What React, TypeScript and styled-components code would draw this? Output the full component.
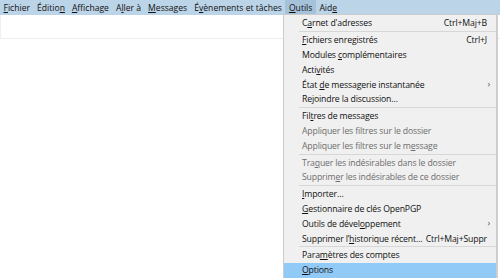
import * as React from 'react'
import styled, { createGlobalStyle } from 'styled-components'

type Entry =
  | { sep: true }
  | {
      sep?: false
      label: string
      key?: number
      shortcut?: string
      disabled?: boolean
      sub?: boolean
      active?: boolean
    }

const menuBar: { label: string; key: number; open?: boolean }[] = [
  { label: 'Fichier', key: 0 },
  { label: 'Édition', key: 6 },
  { label: 'Affichage', key: 0 },
  { label: 'Aller à', key: 1 },
  { label: 'Messages', key: 0 },
  { label: 'Évènements et tâches', key: 1 },
  { label: 'Outils', key: 0, open: true },
  { label: 'Aide', key: 3 },
]

const entries: Entry[] = [
  { label: "Carnet d'adresses", key: 1, shortcut: 'Ctrl+Maj+B' },
  { sep: true },
  { label: 'Fichiers enregistrés', key: 0, shortcut: 'Ctrl+J' },
  { label: 'Modules complémentaires', key: 8 },
  { label: 'Activités', key: 4 },
  { label: 'État de messagerie instantanée', key: 5, sub: true },
  { label: 'Rejoindre la discussion…', key: 2 },
  { sep: true },
  { label: 'Filtres de messages', key: 3 },
  { label: 'Appliquer les filtres sur le dossier', disabled: true },
  { label: 'Appliquer les filtres sur le message', key: 30, disabled: true },
  { sep: true },
  { label: 'Traquer les indésirables dans le dossier', key: 3, disabled: true },
  { label: 'Supprimer les indésirables de ce dossier', key: 7, disabled: true },
  { sep: true },
  { label: 'Importer…', key: 0 },
  { label: 'Gestionnaire de clés OpenPGP', key: 0 },
  { label: 'Outils de développement', key: 15, sub: true },
  { label: 'Supprimer l’historique récent…', key: 12, shortcut: 'Ctrl+Maj+Suppr' },
  { sep: true },
  { label: 'Paramètres des comptes', key: 4 },
  { label: 'Options', key: 0, active: true },
]

const Access: React.FC<{ text: string; at?: number }> = ({ text, at }) => {
  if (at === undefined) return <>{text}</>
  return (
    <>
      {text.slice(0, at)}
      <u>{text.charAt(at)}</u>
      {text.slice(at + 1)}
    </>
  )
}

export default function App() {
  return (
    <>
      <GlobalStyle />
      <Window>
        <MenuBar>
          {menuBar.map((m) => (
            <BarItem key={m.label} $open={m.open}>
              <Access text={m.label} at={m.key} />
            </BarItem>
          ))}
        </MenuBar>
        <Toolbar />
        <Content />

        <Popup>
          {entries.map((e, i) =>
            e.sep ? (
              <Separator key={i} />
            ) : (
              <Item key={i} $disabled={e.disabled} $active={e.active}>
                <Label>
                  <Access text={e.label} at={e.key} />
                </Label>
                {e.shortcut && <Shortcut>{e.shortcut}</Shortcut>}
                {e.sub && <Arrow>›</Arrow>}
              </Item>
            ),
          )}
        </Popup>
        <EdgeLine />
      </Window>
    </>
  )
}

const GlobalStyle = createGlobalStyle`
  html, body {
    margin: 0;
    padding: 0;
    background: #ffffff;
  }
  body {
    font-family: "Open Sans", "Noto Sans", sans-serif;
  }
  u {
    text-decoration-thickness: 1px;
    text-underline-offset: 1px;
  }
`

const Window = styled.div`
  position: relative;
  width: 500px;
  height: 278px;
  overflow: hidden;
  background: #ffffff;
  display: flex;
  flex-direction: column;
`

const MenuBar = styled.div`
  display: flex;
  align-items: stretch;
  height: 15px;
  background: #bcd4e7;
  font-size: 8.6px;
  color: #111;
`

const BarItem = styled.div<{ $open?: boolean }>`
  display: flex;
  align-items: center;
  padding: 0 3.5px;
  background: ${(p) => (p.$open ? '#a6c2da' : 'transparent')};
  white-space: nowrap;
`

const Toolbar = styled.div`
  height: 23px;
  border-left: 1px solid #f0f0f0;
  border-bottom: 1px solid #ededed;
  background: #ffffff;
`

const Content = styled.div`
  flex: 1;
  background: #ffffff;
`

const Popup = styled.div`
  position: absolute;
  top: 14px;
  left: 283px;
  width: 212px;
  padding: 1px 0 0;
  background: #f0f0f0;
  border: 1px solid #cccccc;
  border-bottom: none;
  font-size: 8.7px;
  letter-spacing: -0.15px;
`

const Item = styled.div<{ $disabled?: boolean; $active?: boolean }>`
  position: relative;
  display: flex;
  align-items: center;
  height: 14.8px;
  padding: 0 9px 0 18px;
  color: ${(p) => (p.$disabled ? '#6d6d6d' : '#111111')};
  background: ${(p) => (p.$active ? '#91c9f7' : 'transparent')};
  white-space: nowrap;
`

const Label = styled.span`
  flex: 1;
`

const Shortcut = styled.span`
  margin-left: 3px;
`

const Arrow = styled.span`
  position: absolute;
  right: 6px;
  top: 0;
  line-height: 14px;
  font-size: 9px;
  color: #555;
`

const Separator = styled.div`
  height: 1px;
  margin: 0.5px 0 0.5px 15px;
  background: #d7d7d7;
`

const EdgeLine = styled.div`
  position: absolute;
  top: 15px;
  right: 2px;
  width: 1px;
  height: 263px;
  background: #d0d0d0;
`
